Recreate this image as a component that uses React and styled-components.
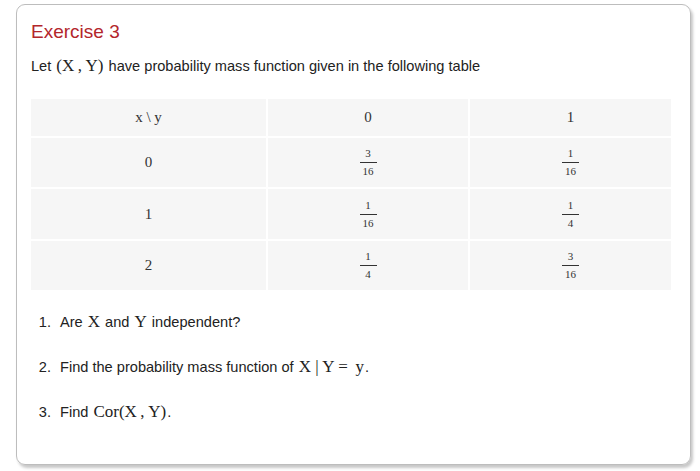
import React from "react";
import styled, { createGlobalStyle } from "styled-components";

const GlobalStyle = createGlobalStyle`
  html, body {
    margin: 0;
    padding: 0;
    background: #ffffff;
  }
  body {
    font-family: "Liberation Sans", Arial, sans-serif;
    color: #222;
  }
`;

const Page = styled.div`
  width: 700px;
  height: 471px;
  padding: 4px 0 0 16px;
  box-sizing: border-box;
`;

const Card = styled.div`
  width: 675px;
  height: 461px;
  box-sizing: border-box;
  border: 1px solid #bdbdbd;
  border-radius: 9px;
  box-shadow: 2px 3px 3px rgba(0, 0, 0, 0.22);
  padding: 15px 14px 0 14px;
`;

const Title = styled.h2`
  margin: 0;
  font-weight: 400;
  font-size: 19px;
  line-height: 24px;
  color: #b3262b;
`;

const Intro = styled.p`
  margin: 12px 0 0 0;
  font-size: 14.6px;
  line-height: 20px;
  color: #222;
`;

const M = styled.span`
  font-family: "Liberation Serif", "Times New Roman", serif;
  font-size: 17px;
  margin: 0 1px;
`;

const Table = styled.div`
  margin-top: 23px;
  width: 640px;
  display: grid;
  grid-template-columns: 235px 200px 201px;
  grid-template-rows: 37px 49px 50px 49px;
  gap: 2px;
`;

const Cell = styled.div`
  background: #f6f6f6;
  display: flex;
  align-items: center;
  justify-content: center;
  font-family: "Liberation Serif", "Times New Roman", serif;
  font-size: 15px;
  color: #333;
`;

const Frac = styled.span`
  display: inline-flex;
  flex-direction: column;
  align-items: center;
  font-family: "Liberation Serif", "Times New Roman", serif;
  font-size: 11px;
  line-height: 11px;
  color: #333;
`;

const Num = styled.span`
  padding: 0 2px 3px;
  border-bottom: 1px solid #333;
  min-width: 13px;
  text-align: center;
`;

const Den = styled.span`
  padding-top: 3px;
`;

const Questions = styled.ol`
  margin: 21px 0 0 0;
  padding-left: 24px;
  font-size: 14.6px;
  line-height: 21px;
  color: #222;

  li {
    padding-left: 5px;
    margin-bottom: 23px;
  }
`;

const F = ({ n, d }) => (
  <Frac>
    <Num>{n}</Num>
    <Den>{d}</Den>
  </Frac>
);

const rows = [
  ["0", ["3", "16"], ["1", "16"]],
  ["1", ["1", "16"], ["1", "4"]],
  ["2", ["1", "4"], ["3", "16"]],
];

export default function App() {
  return (
    <>
      <GlobalStyle />
      <Page>
        <Card>
          <Title>Exercise 3</Title>
          <Intro>
            Let <M>(X{"\u2009"}, Y)</M> have probability mass function given in the following table
          </Intro>
          <Table>
            <Cell>x \ y</Cell>
            <Cell>0</Cell>
            <Cell>1</Cell>
            {rows.map(([x, a, b]) => (
              <React.Fragment key={x}>
                <Cell>{x}</Cell>
                <Cell>
                  <F n={a[0]} d={a[1]} />
                </Cell>
                <Cell>
                  <F n={b[0]} d={b[1]} />
                </Cell>
              </React.Fragment>
            ))}
          </Table>
          <Questions>
            <li>
              Are <M>X</M> and <M>Y</M> independent?
            </li>
            <li>
              Find the probability mass function of <M>X | Y = {"\u2009"}y</M>.
            </li>
            <li>
              Find <M>Cor(X{"\u2009"}, Y)</M>.
            </li>
          </Questions>
        </Card>
      </Page>
    </>
  );
}
